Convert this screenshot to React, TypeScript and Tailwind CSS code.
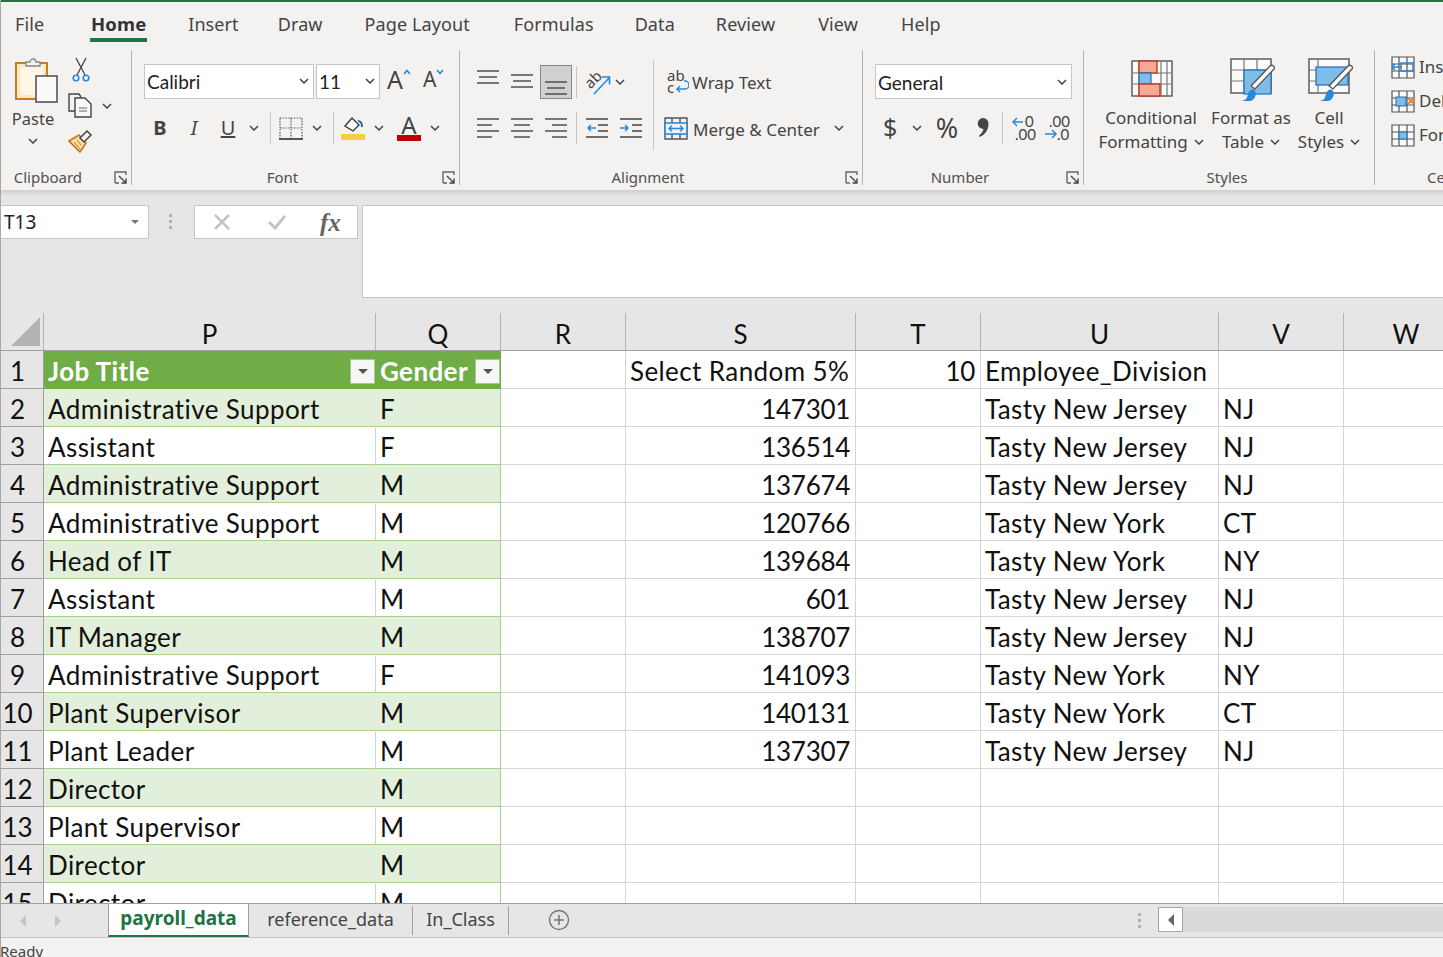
import React from "react";

const ui = "font-['Noto_Sans','Open_Sans',sans-serif]";
const cellFont = "font-['Lato','Liberation_Sans',sans-serif]";

function Chev({ className = "" }: { className?: string }) {
  return (
    <svg width="10" height="6" viewBox="0 0 10 6" className={"shrink-0 " + className}>
      <polyline points="1,1 5,5 9,1" fill="none" stroke="#444" strokeWidth="1.5" />
    </svg>
  );
}

function Launcher() {
  return (
    <svg width="13" height="13" viewBox="0 0 13 13" className="justify-self-end">
      <path d="M1 12V1h11v3M1 12h4" fill="none" stroke="#666" strokeWidth="1.4" />
      <path d="M5 5l7 7M12 7.5V12H7.5" fill="none" stroke="#444" strokeWidth="1.4" />
    </svg>
  );
}

function Group({ label, width, launcher, children, labelClass = "" }: { label: string; width: string; launcher?: boolean; children: React.ReactNode; labelClass?: string }) {
  return (
    <div className={"flex flex-col shrink-0 h-full border-r border-[#b5b3b1] " + width}>
      <div className="flex-1 min-h-0">{children}</div>
      <div className="grid grid-cols-[1fr_auto_1fr] items-center h-[18px] pr-[4px] pt-[1px] text-[15px] leading-[18px] text-[#505050]">
        <span />
        <span className={labelClass}>{label}</span>
        {launcher ? <Launcher /> : <span />}
      </div>
    </div>
  );
}

function Lines({ rows, w = 22, h = 14 }: { rows: [number, number, number][]; w?: number; h?: number }) {
  return (
    <svg width={w} height={h} viewBox={`0 0 ${w} ${h}`} className="shrink-0">
      {rows.map((r, i) => (
        <line key={i} x1={r[0]} x2={r[1]} y1={r[2]} y2={r[2]} stroke="#444" strokeWidth="1.4" />
      ))}
    </svg>
  );
}

function Sep({ className }: { className: string }) {
  return <div className={"w-px bg-[#c8c6c4] shrink-0 " + className} />;
}

function Combo({ text, className }: { text: string; className: string }) {
  return (
    <div className={"flex items-center justify-between bg-white border border-[#c8c6c4] pl-[2px] pr-[4px] text-[19px] text-[#222] " + cellFont + " " + className}>
      <span className="pt-[3px]">{text}</span>
      <Chev />
    </div>
  );
}

const PasteIcon = () => (
  <svg width="44" height="46" viewBox="0 0 44 46" className="shrink-0">
    <rect x="1" y="6" width="31" height="36" fill="#fbe7c2" stroke="#c77d25" strokeWidth="2" />
    <rect x="5" y="10" width="23" height="28" fill="#fdf6e6" />
    <path d="M11 9V5h4a3 3 0 0 1 6 0h4v4z" fill="#f3f2f1" stroke="#888" strokeWidth="1.3" />
    <rect x="21" y="19" width="21" height="26" fill="#fafafa" stroke="#555" strokeWidth="1.6" />
  </svg>
);
const CutIcon = () => (
  <svg width="18" height="25" viewBox="0 0 18 25" className="shrink-0">
    <path d="M4 1l9 17M14 1L5 18" stroke="#444" strokeWidth="1.3" fill="none" />
    <circle cx="4" cy="21" r="2.8" fill="none" stroke="#2b88d8" strokeWidth="1.6" />
    <circle cx="14" cy="21" r="2.8" fill="none" stroke="#2b88d8" strokeWidth="1.6" />
  </svg>
);
const CopyIcon = () => (
  <svg width="25" height="25" viewBox="0 0 25 25" className="shrink-0">
    <path d="M7 18H1V1h10l2 3" fill="none" stroke="#444" strokeWidth="1.4" />
    <path d="M7 5h10l6 6v13H7z" fill="#f8f8f8" stroke="#444" strokeWidth="1.4" />
    <path d="M11 15h8M11 18h8" stroke="#666" strokeWidth="1.2" />
  </svg>
);
const PainterIcon = () => (
  <svg width="25" height="24" viewBox="0 0 25 24" className="shrink-0">
    <path d="M1 12l10-6 7 8-6 9z" fill="#fbdca8" stroke="#c8741a" strokeWidth="1.6" />
    <path d="M6 13l6 7M9 11l4 5" stroke="#c8741a" strokeWidth="1" />
    <path d="M12 9l7-7 4 4-7 7z" fill="#f3f2f1" stroke="#444" strokeWidth="1.5" />
  </svg>
);
const BordersIcon = () => (
  <svg width="24" height="23" viewBox="0 0 24 23" className="shrink-0">
    <path d="M1 1h22M1 1v20M23 1v20M12 1v20M1 11h22" stroke="#555" strokeWidth="1.2" strokeDasharray="1.4 1.4" fill="none" />
    <path d="M0 22h24" stroke="#222" strokeWidth="1.5" />
  </svg>
);
const FillIcon = () => (
  <svg width="25" height="25" viewBox="0 0 25 25" className="shrink-0">
    <path d="M4 10l7-8 7 7-6 6z" fill="#fafafa" stroke="#333" strokeWidth="1.3" />
    <path d="M17 5c3 0 4 2 4 6" fill="none" stroke="#1f6fb5" strokeWidth="2" />
    <rect x="0" y="18" width="24" height="6" fill="#f4cf45" />
  </svg>
);
const FontColorIcon = () => (
  <div className="flex flex-col items-center w-[24px] shrink-0">
    <span className="text-[24px] leading-[20px] h-[20px] text-[#444]">A</span>
    <div className="w-[24px] h-[6px] bg-[#c00000]" />
  </div>
);
const OrientIcon = () => (
  <svg width="26" height="25" viewBox="0 0 26 25" className="shrink-0 overflow-visible">
    <text x="-0.5" y="15" fontSize="15" fill="#444" transform="rotate(-45 8 10)" fontFamily="Noto Sans">ab</text>
    <path d="M9 24L24 8M17 7h7.5v7.5" fill="none" stroke="#2b88d8" strokeWidth="1.6" />
  </svg>
);
const WrapIcon = () => (
  <svg width="22" height="24" viewBox="0 0 22 24" className="shrink-0">
    <text x="0" y="11" fontSize="15" fill="#444" fontFamily="Noto Sans">ab</text>
    <text x="0" y="23" fontSize="15" fill="#444" fontFamily="Noto Sans">c</text>
    <path d="M17 11h1a3 3 0 0 1 0 8H10M13 16l-3 3 3 3" fill="none" stroke="#2b88d8" strokeWidth="1.5" />
  </svg>
);
const MergeIcon = () => (
  <svg width="24" height="23" viewBox="0 0 24 23" className="shrink-0">
    <path d="M1 1h22v21H1zM8 1v21M16 1v21" fill="none" stroke="#555" strokeWidth="1.4" />
    <rect x="1" y="6" width="22" height="11" fill="#f3f2f1" stroke="#2b88d8" strokeWidth="1.6" />
    <path d="M5 11.500h14M8 8.500l-3 3 3 3M16 8.500l3 3-3 3" fill="none" stroke="#2b88d8" strokeWidth="1.4" />
  </svg>
);
function IndentIcon({ dir }: { dir: "l" | "r" }) {
  return (
    <svg width="22" height="20" viewBox="0 0 22 20" className="shrink-0">
      <path d="M0 1h22M0 19h22M12 7h10M12 13h10" stroke="#444" strokeWidth="1.4" />
      {dir === "l" ? (
        <path d="M10 10H2M5 7l-3 3 3 3" fill="none" stroke="#2b88d8" strokeWidth="1.6" />
      ) : (
        <path d="M0 10h8M5 7l3 3-3 3" fill="none" stroke="#2b88d8" strokeWidth="1.6" />
      )}
    </svg>
  );
}
function DecIcon({ inc }: { inc: boolean }) {
  return (
    <svg width="25" height="26" viewBox="0 0 25 26" className="shrink-0">
      {inc ? (
        <>
          <path d="M11 7H1M5 3L1 7l4 4" fill="none" stroke="#2b88d8" strokeWidth="1.5" />
          <text x="13" y="12" fontSize="15" fill="#444" fontFamily="Lato">0</text>
          <text x="3" y="25" fontSize="15" fill="#444" fontFamily="Lato">.00</text>
        </>
      ) : (
        <>
          <text x="4" y="12" fontSize="15" fill="#444" fontFamily="Lato">.00</text>
          <path d="M0 19h11M7 15l4 4-4 4" fill="none" stroke="#2b88d8" strokeWidth="1.5" />
          <text x="12" y="25" fontSize="15" fill="#444" fontFamily="Lato">.0</text>
        </>
      )}
    </svg>
  );
}
const CommaIcon = () => (
  <svg width="12" height="20" viewBox="0 0 12 20" className="shrink-0">
    <path d="M6 0a5.500 5.500 0 0 1 5.500 6c0 6-4 11-8.500 13l-1-1.300c2.500-2 4-4.500 4.500-6.700A5.500 5.500 0 1 1 6 0z" fill="#444" />
  </svg>
);
const CaretBlue = ({ down }: { down?: boolean }) => (
  <svg width="8" height="6" viewBox="0 0 8 6" className={"shrink-0 -mt-[18px] " + (down ? "rotate-180" : "")}>
    <polyline points="1,5 4,1.500 7,5" fill="none" stroke="#2b88d8" strokeWidth="1.6" />
  </svg>
);
const CondIcon = () => (
  <svg width="42" height="38" viewBox="0 0 42 38" className="shrink-0">
    <rect x="1" y="1" width="40" height="35" fill="#fafafa" stroke="#555" strokeWidth="1.4" />
    <path d="M1 13h40M1 24h40M8 1v35M30 1v35M36 1v35" stroke="#777" strokeWidth="1.2" />
    <rect x="8" y="1" width="18" height="12" fill="#f4a896" stroke="#c0391b" strokeWidth="1.4" />
    <rect x="8" y="13" width="12" height="11" fill="#7fbce8" stroke="#1f6fb5" strokeWidth="1.2" />
    <rect x="8" y="24" width="21" height="12" fill="#f4a896" stroke="#c0391b" strokeWidth="1.4" />
  </svg>
);
const Brush = () => (
  <>
    <path d="M44 11L25 31l-4-3L40 8c2-2 6 1 4 3z" fill="#fafafa" stroke="#555" strokeWidth="1.3" />
    <path d="M10 43c5 0 7-2 8-7 1-4 5-6 7-3 2 3 0 9-5 10z" fill="#2b88d8" />
  </>
);
const TableIcon = () => (
  <svg width="46" height="44" viewBox="0 0 46 44" className="shrink-0 ml-[4px]">
    <rect x="1" y="1" width="40" height="34" fill="#fafafa" stroke="#555" strokeWidth="1.4" />
    <path d="M1 12h40M1 23h40M14 1v34M27 1v34" stroke="#777" strokeWidth="1.2" />
    <rect x="14" y="12" width="27" height="24" fill="#7fbce8" stroke="#1f6fb5" strokeWidth="1.2" />
    <Brush />
  </svg>
);
const StylesIcon = () => (
  <svg width="46" height="44" viewBox="0 0 46 44" className="shrink-0 ml-[3px]">
    <rect x="1" y="1" width="40" height="34" fill="#fafafa" stroke="#555" strokeWidth="1.4" />
    <path d="M1 12h40M1 23h9M10 1v34" stroke="#777" strokeWidth="1.2" />
    <rect x="8" y="9" width="32" height="18" fill="#7fbce8" stroke="#1f6fb5" strokeWidth="1.2" />
    <Brush />
  </svg>
);
function CellIcon({ kind }: { kind: "ins" | "del" | "for" }) {
  return (
    <svg width="24" height="24" viewBox="0 0 24 24" className="shrink-0">
      <path d="M1 2h22v21H1zM1 9h22M1 16h22M8 2v21M16 2v21" fill="#fafafa" stroke="#555" strokeWidth="1.2" />
      {kind === "ins" && <path d="M10 8h12v8H10zM11 12H1M4 9l-3 3 3 3" fill="none" stroke="#2b88d8" strokeWidth="1.5" />}
      {kind === "del" && (
        <>
          <rect x="5" y="8" width="10" height="9" fill="#7fbce8" stroke="#1f6fb5" />
          <path d="M17 9l6 6M23 9l-6 6" stroke="#e8862e" strokeWidth="2" />
        </>
      )}
      {kind === "for" && <rect x="8" y="9" width="8" height="7" fill="#7fbce8" stroke="#1f6fb5" />}
    </svg>
  );
}

function Tabs() {
  const items: [string, string][] = [
    ["File", "ml-[14px]"],
    ["Home", "ml-[46px]"],
    ["Insert", "ml-[41px]"],
    ["Draw", "ml-[39px]"],
    ["Page Layout", "ml-[42px]"],
    ["Formulas", "ml-[44px]"],
    ["Data", "ml-[41px]"],
    ["Review", "ml-[41px]"],
    ["View", "ml-[43px]"],
    ["Help", "ml-[43px]"],
  ];
  return (
    <div className="flex h-[42px] text-[18px] tracking-[0.1px] text-[#444] shrink-0">
      {items.map(([t, m]) =>
        t === "Home" ? (
          <div key={t} className={"flex flex-col items-center h-[41px] pt-[9px] " + m}>
            <span className="font-bold text-[18.500px] leading-[26px] text-[#333]">{t}</span>
            <div className="w-[57px] h-[4px] bg-[#217346] mt-[1px]" />
          </div>
        ) : (
          <div key={t} className={"pt-[9px] leading-[26px] " + m}>{t}</div>
        )
      )}
    </div>
  );
}

function Ribbon() {
  return (
    <div className="flex h-[146px] pt-[6px] pb-[5px] bg-[#f3f2f1] shrink-0 overflow-hidden">
      <Group label="Clipboard" width="w-[131px]" launcher labelClass="mr-[32px]">
        <div className="flex pt-[7px]">
          <div className="flex flex-col items-center w-[46px] ml-[9px]">
            <div className="self-start ml-[5px]"><PasteIcon /></div>
            <span className="text-[16.500px] leading-[22px] mt-[5px] text-[#444]">Paste</span>
            <Chev className="mt-[8px]" />
          </div>
          <div className="flex flex-col ml-[12px]">
            <div className="pl-[4px]"><CutIcon /></div>
            <div className="flex items-center mt-[11px]"><CopyIcon /><Chev className="ml-[9px]" /></div>
            <div className="mt-[11px]"><PainterIcon /></div>
          </div>
        </div>
      </Group>

      <Group label="Font" width="w-[328px]" launcher labelClass="mr-[22px]">
        <div className="flex items-center mt-[14px] ml-[12px] h-[34px]">
          <Combo text="Calibri" className="w-[170px] h-[35px]" />
          <Combo text="11" className="w-[64px] h-[35px] ml-[2px]" />
          <span className="text-[25px] text-[#444] ml-[7px] leading-[30px] -mt-[4px]">A</span>
          <CaretBlue />
          <span className="text-[21px] text-[#444] ml-[12px] leading-[30px] -mt-[4px]">A</span>
          <CaretBlue down />
        </div>
        <div className="flex items-center mt-[13px] h-[34px] text-[#444]">
          <span className="w-[34px] ml-[11px] text-center text-[20px] font-bold">B</span>
          <span className="w-[34px] text-center text-[20px] italic">I</span>
          <span className="w-[34px] text-center text-[20px] underline">U</span>
          <Chev className="ml-[4px]" />
          <Sep className="h-[32px] ml-[11px]" />
          <div className="ml-[8px]"><BordersIcon /></div>
          <Chev className="ml-[9px]" />
          <Sep className="h-[32px] ml-[11px]" />
          <div className="ml-[7px]"><FillIcon /></div>
          <Chev className="ml-[8px]" />
          <div className="ml-[13px]"><FontColorIcon /></div>
          <Chev className="ml-[9px]" />
        </div>
      </Group>

      <Group label="Alignment" width="w-[403px]" launcher labelClass="mr-[22px]">
        <div className="flex h-[118px]">
          <div className="flex flex-col">
            <div className="flex items-center h-[34px] mt-[15px] ml-[17px]">
              <div className="-mt-[10px]"><Lines rows={[[0, 22, 1], [2, 20, 7], [0, 22, 13]]} /></div>
              <div className="ml-[12px] -mt-[2px]"><Lines rows={[[0, 22, 1], [2, 20, 7], [0, 22, 13]]} /></div>
              <div className="flex items-end justify-center w-[32px] h-[34px] ml-[7px] pb-[3px] bg-[#d2d0ce] border border-[#8a8886]">
                <Lines rows={[[0, 22, 1], [2, 20, 7], [0, 22, 13]]} />
              </div>
              <Sep className="h-[32px] ml-[4px]" />
              <div className="ml-[8px]"><OrientIcon /></div>
              <Chev className="ml-[4px]" />
            </div>
            <div className="flex items-center h-[34px] mt-[12px] ml-[17px]">
              <Lines rows={[[0, 22, 1], [0, 15, 7], [0, 22, 13], [0, 15, 19]]} h={20} />
              <div className="ml-[12px]"><Lines rows={[[0, 22, 1], [3, 19, 7], [0, 22, 13], [3, 19, 19]]} h={20} /></div>
              <div className="ml-[12px]"><Lines rows={[[0, 22, 1], [7, 22, 7], [0, 22, 13], [7, 22, 19]]} h={20} /></div>
              <Sep className="h-[32px] ml-[9px]" />
              <div className="ml-[9px]"><IndentIcon dir="l" /></div>
              <div className="ml-[12px]"><IndentIcon dir="r" /></div>
            </div>
          </div>
          <Sep className="h-[90px] mt-[10px] ml-[11px]" />
          <div className="flex flex-col ml-[10px] text-[17px] text-[#444]">
            <div className="flex items-center h-[34px] mt-[15px] pl-[3px]">
              <WrapIcon />
              <span className="ml-[3px] mt-[2px]">Wrap Text</span>
            </div>
            <div className="flex items-center h-[34px] mt-[12px]">
              <MergeIcon />
              <span className="ml-[5px] mt-[3px]">Merge &amp; Center</span>
              <Chev className="ml-[14px]" />
            </div>
          </div>
        </div>
      </Group>

      <Group label="Number" width="w-[221px]" launcher labelClass="mr-[22px]">
        <Combo text="General" className="w-[197px] h-[35px] mt-[14px] ml-[12px]" />
        <div className="flex items-center h-[34px] mt-[12px] text-[#444]">
          <span className="ml-[20px] text-[25px] w-[14px]">$</span>
          <Chev className="ml-[15px]" />
          <span className="ml-[13px] text-[27px] w-[24px] text-center">%</span>
          <div className="ml-[18px]"><CommaIcon /></div>
          <Sep className="h-[32px] ml-[13px]" />
          <div className="ml-[9px]"><DecIcon inc /></div>
          <div className="ml-[8px]"><DecIcon inc={false} /></div>
        </div>
      </Group>

      <Group label="Styles" width="w-[291px]">
        <div className="flex text-[17px] leading-[24px] text-[#444] text-center pt-[8px]">
          <div className="flex flex-col items-center w-[102px] ml-[16px]">
            <div className="h-[44px] pt-[2px] pl-[1px]"><CondIcon /></div>
            <span className="mt-[4px]">Conditional</span>
            <span className="flex items-center whitespace-nowrap">Formatting<Chev className="ml-[6px]" /></span>
          </div>
          <div className="flex flex-col items-center w-[82px] ml-[8px]">
            <TableIcon />
            <span className="mt-[4px] whitespace-nowrap">Format as</span>
            <span className="flex items-center">Table<Chev className="ml-[6px]" /></span>
          </div>
          <div className="flex flex-col items-center w-[64px] ml-[5px]">
            <StylesIcon />
            <span className="mt-[4px]">Cell</span>
            <span className="flex items-center">Styles<Chev className="ml-[6px]" /></span>
          </div>
        </div>
      </Group>

      <div className="flex flex-col h-full flex-1 min-w-0 overflow-hidden">
        <div className="flex-1 min-h-0 pl-[16px] pt-[5px] text-[17px] text-[#444]">
          <div className="flex items-center h-[24px]"><CellIcon kind="ins" /><span className="ml-[4px]">Insert</span></div>
          <div className="flex items-center h-[24px] mt-[10px]"><CellIcon kind="del" /><span className="ml-[4px]">Delete</span></div>
          <div className="flex items-center h-[24px] mt-[10px]"><CellIcon kind="for" /><span className="ml-[4px]">Format</span></div>
        </div>
        <div className="h-[18px] pt-[1px] pl-[52px] text-[15px] leading-[18px] text-[#505050] whitespace-nowrap">Cells</div>
      </div>
    </div>
  );
}

function FormulaBar() {
  return (
    <div className="flex h-[123px] shrink-0 bg-[#e6e6e6] pt-[15px] items-start relative">
      <div className="flex items-center justify-between w-[148px] h-[34px] bg-white border border-l-0 border-[#c8c6c4] pl-[3px] pr-[9px] text-[19px] text-[#222]">
        <span className="pt-[1px]">T13</span>
        <div className="w-0 h-0 border-x-[4px] border-x-transparent border-t-[4px] border-t-[#777]" />
      </div>
      <div className="flex flex-col gap-[3px] ml-[20px] mt-[9px] w-[3px]">
        <div className="w-[3px] h-[3px] bg-[#b0b0b0]" />
        <div className="w-[3px] h-[3px] bg-[#b0b0b0]" />
        <div className="w-[3px] h-[3px] bg-[#b0b0b0]" />
      </div>
      <div className="flex items-center w-[164px] h-[34px] ml-[22px] bg-white border border-[#c8c6c4]">
        <svg width="18" height="18" viewBox="0 0 18 18" className="ml-[18px] shrink-0"><path d="M2 2l14 14M16 2L2 16" stroke="#c4c4c4" strokeWidth="2.5" /></svg>
        <svg width="20" height="18" viewBox="0 0 20 18" className="ml-[36px] shrink-0"><path d="M2 9l6 6L18 3" fill="none" stroke="#c4c4c4" strokeWidth="3" /></svg>
        <span className="ml-[33px] font-['Liberation_Serif',serif] italic font-bold text-[25px] leading-[25px] text-[#666]">fx</span>
      </div>
      <div className="flex-1 h-[93px] ml-[4px] bg-white border border-r-0 border-[#c8c6c4]" />
    </div>
  );
}

const widths = ["w-[332px]", "w-[125px]", "w-[125px]", "w-[230px]", "w-[125px]", "w-[238px]", "w-[125px]", "w-[125px]"];
const cols = ["P", "Q", "R", "S", "T", "U", "V", "W"];

const rows: [string, string, string, string][] = [
  ["Administrative Support", "F", "147301", "Tasty New Jersey|NJ"],
  ["Assistant", "F", "136514", "Tasty New Jersey|NJ"],
  ["Administrative Support", "M", "137674", "Tasty New Jersey|NJ"],
  ["Administrative Support", "M", "120766", "Tasty New York|CT"],
  ["Head of IT", "M", "139684", "Tasty New York|NY"],
  ["Assistant", "M", "601", "Tasty New Jersey|NJ"],
  ["IT Manager", "M", "138707", "Tasty New Jersey|NJ"],
  ["Administrative Support", "F", "141093", "Tasty New York|NY"],
  ["Plant Supervisor", "M", "140131", "Tasty New York|CT"],
  ["Plant Leader", "M", "137307", "Tasty New Jersey|NJ"],
  ["Director", "M", "", "|"],
  ["Plant Supervisor", "M", "", "|"],
  ["Director", "M", "", "|"],
  ["Director", "M", "", "|"],
];

function Cell({ w, className = "", track = "tracking-[0.4px]", children }: { w: string; className?: string; track?: string; children?: React.ReactNode }) {
  return (
    <div className={"shrink-0 h-full flex items-center pl-[4px] pr-[5px] pt-[4px] whitespace-nowrap border-r border-b " + track + " " + w + " " + className}>
      {children}
    </div>
  );
}

function FilterBtn() {
  return (
    <div className="ml-auto -mr-[5px] mt-[-1px] flex items-center justify-center w-[25px] h-[25px] bg-[#f6f6f6] border border-[#a6c98c] shrink-0">
      <div className="w-0 h-0 border-x-[5px] border-x-transparent border-t-[5px] border-t-[#555]" />
    </div>
  );
}

function RowHead({ n }: { n: number }) {
  return (
    <div className="w-[43px] shrink-0 h-full flex items-center justify-center pr-[9px] pt-[4px] bg-[#e6e6e6] border-r border-b border-[#9f9f9f]">{n}</div>
  );
}

function Grid() {
  const plain = "border-[#d4d4d4] bg-white";
  return (
    <div className={"flex-1 min-h-0 overflow-hidden bg-white text-[26px] text-[#111] " + cellFont}>
      <div className="flex h-[38px] bg-[#e6e6e6] border-b border-[#9f9f9f]">
        <div className="w-[43px] shrink-0 h-full flex items-end justify-end pr-[3px] pb-[4px] border-r border-[#b5b5b5]">
          <div className="w-0 h-0 border-l-[29px] border-l-transparent border-b-[29px] border-b-[#b4b4b4]" />
        </div>
        {cols.map((c, i) => (
          <div key={c} className={"shrink-0 h-full flex items-end justify-center leading-[32px] border-r border-[#b5b5b5] " + widths[i]}>{c}</div>
        ))}
      </div>
      <div className="flex h-[38px]">
        <RowHead n={1} />
        <Cell w={widths[0]} className="bg-[#70ad47] border-[#70ad47] text-white font-bold">Job Title<FilterBtn /></Cell>
        <Cell w={widths[1]} className="bg-[#70ad47] border-[#70ad47] text-white font-bold">Gender<FilterBtn /></Cell>
        <Cell w={widths[2]} className={plain} />
        <Cell w={widths[3]} className={plain}>Select Random 5%</Cell>
        <Cell w={widths[4]} className={plain + " justify-end"} track="tracking-[-0.3px]">10</Cell>
        <Cell w={widths[5]} className={plain}>Employee_Division</Cell>
        <Cell w={widths[6]} className={plain} />
        <Cell w={widths[7]} className={plain} />
      </div>
      {rows.map((r, i) => {
        const [u, v] = r[3].split("|");
        const green = i % 2 === 0;
        const pCell = green ? "bg-[#e2efda] border-b-[#a9d08e] border-r-[#e2efda]" : "bg-white border-b-[#a9d08e] border-r-[#d4d4d4]";
        const qCell = (green ? "bg-[#e2efda]" : "bg-white") + " border-b-[#a9d08e] border-r-[#a9d08e]";
        return (
          <div key={i} className="flex h-[38px]">
            <RowHead n={i + 2} />
            <Cell w={widths[0]} className={pCell}>{r[0]}</Cell>
            <Cell w={widths[1]} className={qCell}>{r[1]}</Cell>
            <Cell w={widths[2]} className={plain} />
            <Cell w={widths[3]} className={plain + " justify-end"} track="tracking-[-0.3px]">{r[2]}</Cell>
            <Cell w={widths[4]} className={plain} />
            <Cell w={widths[5]} className={plain}>{u}</Cell>
            <Cell w={widths[6]} className={plain}>{v}</Cell>
            <Cell w={widths[7]} className={plain} />
          </div>
        );
      })}
    </div>
  );
}

function SheetTabs() {
  return (
    <div className="flex items-stretch h-[35px] shrink-0 bg-[#e6e6e6] border-t border-b border-t-[#9f9f9f] border-b-[#c4c4c4] text-[18px] text-[#444]">
      <div className="flex items-center w-[107px] pl-[19px] gap-[29px]">
        <div className="w-0 h-0 border-y-[6px] border-y-transparent border-r-[6px] border-r-[#c4c4c4]" />
        <div className="w-0 h-0 border-y-[6px] border-y-transparent border-l-[6px] border-l-[#c4c4c4]" />
      </div>
      <div className="flex items-center justify-center w-[141px] h-[33px] pb-[3px] bg-white border-x border-b-2 border-x-[#9f9f9f] border-b-[#217346] font-bold text-[19px] text-[#217346]">payroll_data</div>
      <div className="flex items-center justify-center w-[164px] h-[29px] mt-[2px] pb-[3px] border-r border-[#9f9f9f]">reference_data</div>
      <div className="flex items-center justify-center w-[96px] h-[29px] mt-[2px] pb-[3px] border-r border-[#9f9f9f]">In_Class</div>
      <div className="flex items-center ml-[39px] pb-[2px]">
        <svg width="22" height="22" viewBox="0 0 22 22"><circle cx="11" cy="11" r="9.500" fill="none" stroke="#777" strokeWidth="1.4" /><path d="M11 6v10M6 11h10" stroke="#777" strokeWidth="1.6" /></svg>
      </div>
      <div className="flex flex-col gap-[3px] ml-[568px] justify-center w-[3px]">
        <div className="w-[3px] h-[3px] bg-[#b0b0b0]" />
        <div className="w-[3px] h-[3px] bg-[#b0b0b0]" />
        <div className="w-[3px] h-[3px] bg-[#b0b0b0]" />
      </div>
      <div className="flex-1 flex items-center ml-[17px] h-[25px] mt-[3px] bg-[#dadada]">
        <div className="flex items-center justify-center w-[25px] h-[25px] bg-white border border-[#a6a6a6]">
          <div className="w-0 h-0 border-y-[6px] border-y-transparent border-r-[6px] border-r-[#666]" />
        </div>
      </div>
    </div>
  );
}

export default function App() {
  return (
    <div className={"w-[1443px] h-[957px] flex flex-col overflow-hidden border-l border-[#a8a8a8] bg-[#f3f2f1] " + ui}>
      <div className="h-[2px] -ml-px bg-[#217346] shrink-0" />
      <div className="bg-[#f3f2f1] shrink-0">
        <Tabs />
        <Ribbon />
      </div>
      <div className="h-0 relative z-10 shrink-0">
        <div className="h-[6px] bg-gradient-to-b from-[#cfcfcf] to-[#e6e6e6]" />
      </div>
      <FormulaBar />
      <Grid />
      <SheetTabs />
      <div className="h-[19px] shrink-0 -ml-px bg-[#f3f2f1] text-[15px] leading-[27px] text-[#444] overflow-hidden">Ready</div>
    </div>
  );
}
